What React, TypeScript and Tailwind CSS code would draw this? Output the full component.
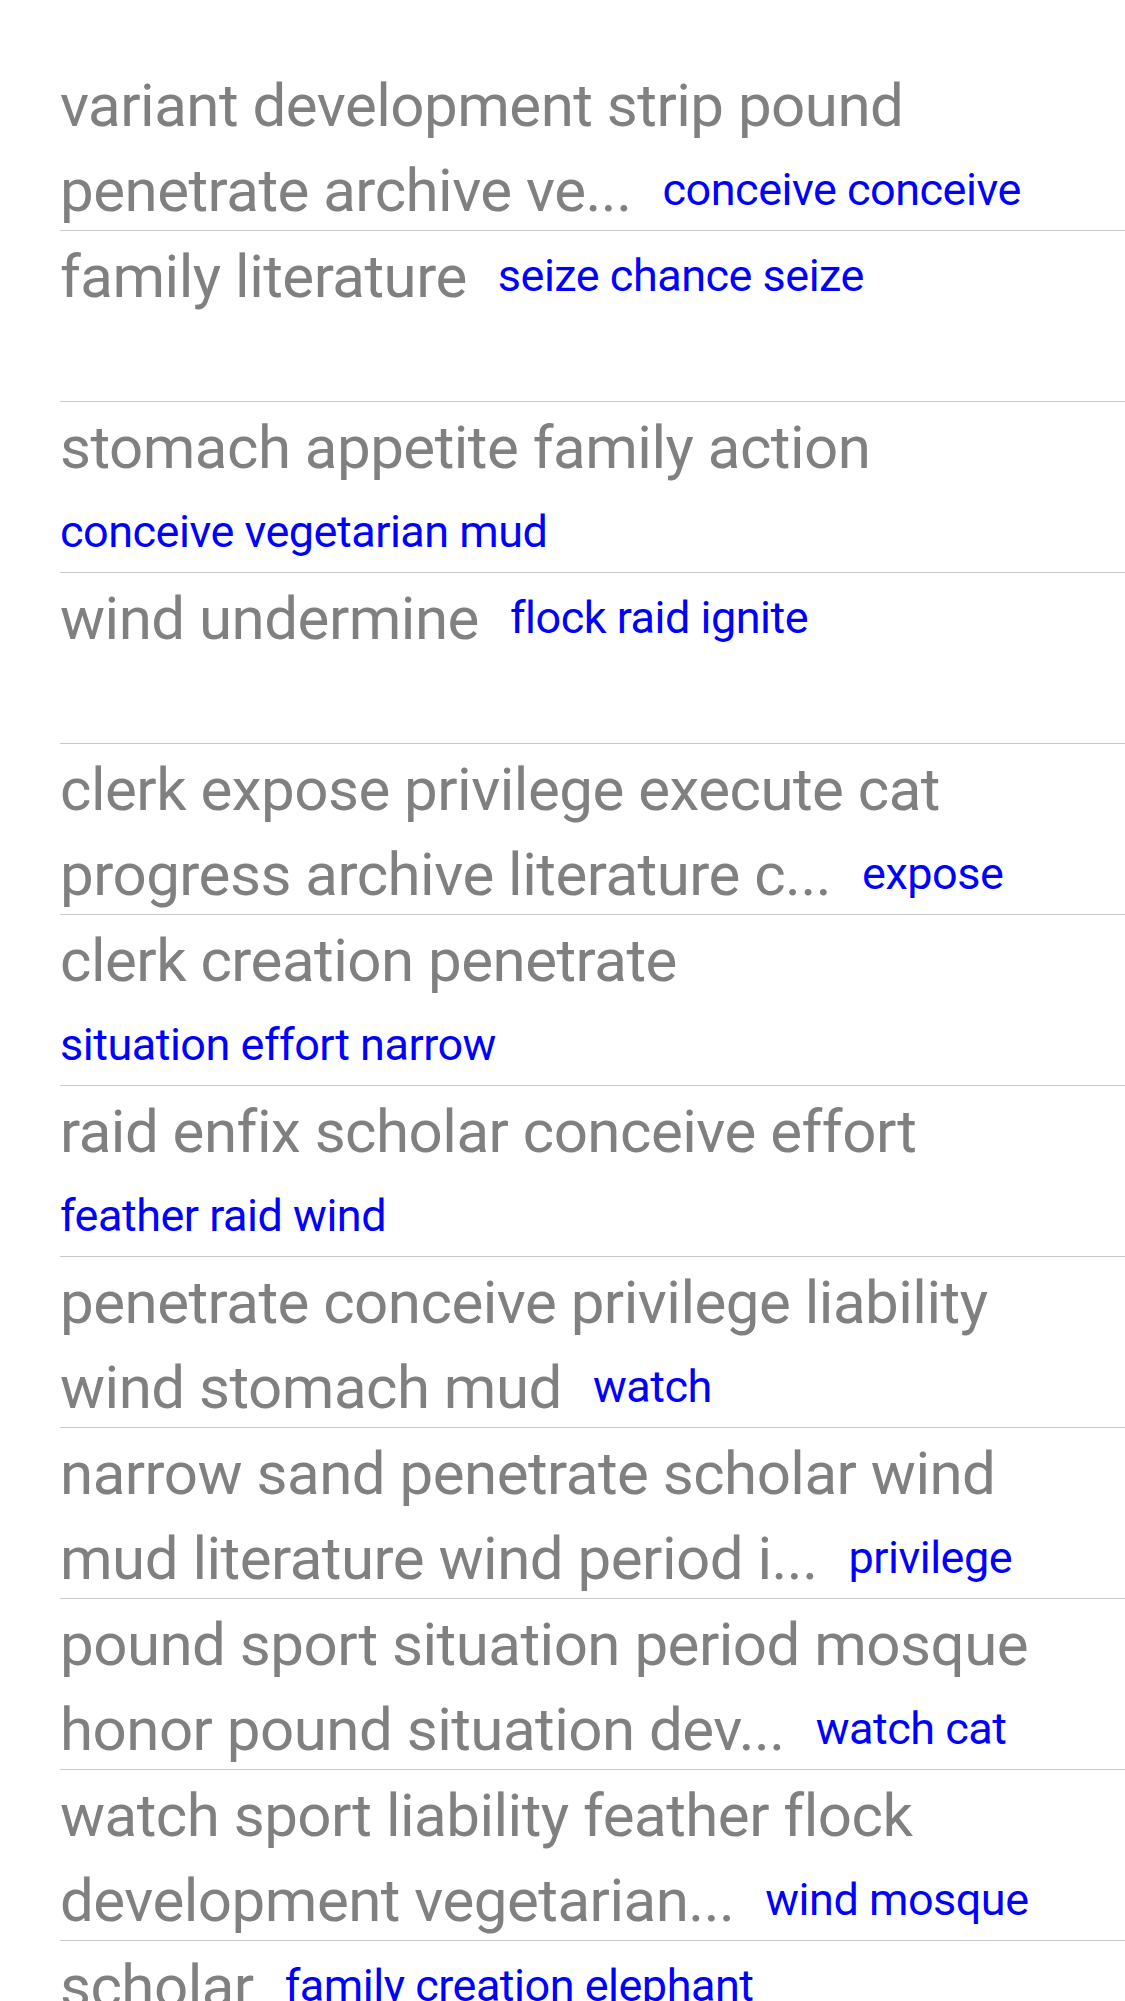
import React from "react";

type Row = {
  lines: string[];
  link: string;
  wrap?: boolean;
};

const rows: Row[] = [
  {
    lines: ["variant development strip pound", "penetrate archive ve..."],
    link: "conceive conceive",
  },
  { lines: ["family literature"], link: "seize chance seize" },
  {
    lines: ["stomach appetite family action"],
    link: "conceive vegetarian mud",
    wrap: true,
  },
  { lines: ["wind undermine"], link: "flock raid ignite" },
  {
    lines: ["clerk expose privilege execute cat", "progress archive literature c..."],
    link: "expose",
  },
  {
    lines: ["clerk creation penetrate"],
    link: "situation effort narrow",
    wrap: true,
  },
  {
    lines: ["raid enfix scholar conceive effort"],
    link: "feather raid wind",
    wrap: true,
  },
  {
    lines: ["penetrate conceive privilege liability", "wind stomach mud"],
    link: "watch",
  },
  {
    lines: ["narrow sand penetrate scholar wind", "mud literature wind period i..."],
    link: "privilege",
  },
  {
    lines: ["pound sport situation period mosque", "honor pound situation dev..."],
    link: "watch cat",
  },
  {
    lines: ["watch sport liability feather flock", "development vegetarian..."],
    link: "wind mosque",
  },
  { lines: ["scholar"], link: "family creation elephant" },
];

const Link = ({ text, inline }: { text: string; inline: boolean }) => (
  <span
    className={`text-[45px] leading-[60px] tracking-[-0.5px] text-[#0000ff] [vertical-align:6px] ${
      inline ? "ml-[31px]" : ""
    }`}
  >
    {text}
  </span>
);

const ListRow = ({ row }: { row: Row }) => {
  const last = row.lines.length - 1;
  return (
    <div className="h-[171px] pt-[3px] border-b border-[#c8c7cc]">
      {row.lines.map((line, i) => (
        <div
          key={i}
          className="h-[85px] text-[60px] leading-[85px] text-[#808080] whitespace-nowrap"
        >
          <span className="tracking-[-0.5px]">{line}</span>
          {i === last && !row.wrap && <Link text={row.link} inline />}
        </div>
      ))}
      {row.wrap && (
        <div className="h-[85px] text-[60px] leading-[85px] whitespace-nowrap">
          <Link text={row.link} inline={false} />
        </div>
      )}
    </div>
  );
};

export default function App() {
  return (
    <div className="min-h-screen bg-white pt-[60px] pl-[60px] font-[Roboto,sans-serif] overflow-hidden">
      {rows.map((row, i) => (
        <ListRow key={i} row={row} />
      ))}
    </div>
  );
}
